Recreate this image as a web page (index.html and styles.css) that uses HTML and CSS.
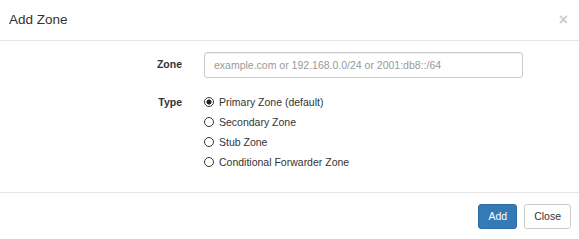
FILE: index.html
```html
<!DOCTYPE html>
<html lang="en">
<head>
    <meta charset="UTF-8">
    <title>Add Zone</title>
    <link rel="stylesheet" href="styles.css">
</head>
<body>
    <div class="modal-content">
        <div class="modal-header">
            <h4 class="modal-title">Add Zone</h4>
            <button type="button" class="close">&times;</button>
        </div>

        <div class="modal-body">
            <div class="form-group">
                <label class="control-label" for="txtZone">Zone</label>
                <div class="field">
                    <input type="text" id="txtZone" class="form-control" placeholder="example.com or 192.168.0.0/24 or 2001:db8::/64">
                </div>
            </div>
            <div class="form-group">
                <label class="control-label type-label">Type</label>
                <div class="field">
                    <label class="radio"><input type="radio" name="zoneType" checked> Primary Zone (default)</label>
                    <label class="radio"><input type="radio" name="zoneType"> Secondary Zone</label>
                    <label class="radio"><input type="radio" name="zoneType"> Stub Zone</label>
                    <label class="radio"><input type="radio" name="zoneType"> Conditional Forwarder Zone</label>
                </div>
            </div>
        </div>

        <div class="modal-footer">
            <button type="button" class="btn btn-primary">Add</button>
            <button type="button" class="btn btn-default">Close</button>
        </div>
    </div>
</body>
</html>
```

FILE: styles.css
```css
body {
    font-family: "Liberation Sans", Arial, sans-serif;
    font-size: 10.5px;
    color: #333;
    background-color: #fff;
    margin: 0;
    padding: 0;
}

.modal-content {
    width: 579px;
    background-color: #fff;
}

.modal-header {
    display: flex;
    justify-content: space-between;
    align-items: flex-start;
    padding: 11px 11px 11px 9px;
    border-bottom: 1px solid #e5e5e5;
}

.modal-title {
    margin: 0;
    font-size: 13.5px;
    font-weight: normal;
    line-height: 18px;
    color: #333;
}

.close {
    background: none;
    border: none;
    padding: 0;
    margin-top: 1px;
    font-family: "Liberation Sans", Arial, sans-serif;
    font-size: 15.75px;
    font-weight: bold;
    line-height: 16px;
    color: #000;
    opacity: 0.2;
    cursor: pointer;
}

.modal-body {
    padding: 11px 0 9px 0;
}

.form-group {
    display: grid;
    grid-template-columns: 193px 1fr;
    margin-bottom: 11px;
}

.control-label {
    text-align: right;
    font-weight: bold;
    padding: 5px 11px 0 0;
    line-height: 15px;
}

.type-label {
    padding-top: 6px;
}

.field {
    padding: 0 11px;
}

.form-control {
    display: block;
    box-sizing: border-box;
    width: 319px;
    height: 25.5px;
    padding: 4px 9px;
    font-family: "Liberation Sans", Arial, sans-serif;
    font-size: 10.5px;
    color: #555;
    border: 1px solid #ccc;
    border-radius: 3px;
    box-shadow: inset 0 1px 1px rgba(0, 0, 0, 0.075);
    outline: none;
}

.form-control::placeholder {
    color: #999;
}

.radio {
    display: flex;
    align-items: center;
    height: 20px;
    font-weight: normal;
    cursor: pointer;
}

.radio:first-child {
    margin-top: 3px;
}

.radio input {
    appearance: none;
    -webkit-appearance: none;
    box-sizing: border-box;
    width: 10px;
    height: 10px;
    margin: 0 5px 0 0;
    border: 1px solid #333;
    border-radius: 50%;
    background-color: #fff;
}

.radio input:checked {
    background: radial-gradient(circle, #222 0, #222 2.3px, #fff 2.8px);
}

.modal-footer {
    display: flex;
    justify-content: flex-end;
    gap: 7px;
    padding: 11px 8px 11px 11px;
    border-top: 1px solid #e5e5e5;
}

.btn {
    box-sizing: border-box;
    height: 25.5px;
    padding: 4px 9px;
    font-family: "Liberation Sans", Arial, sans-serif;
    font-size: 10.5px;
    line-height: 15px;
    border: 1px solid transparent;
    border-radius: 3px;
    cursor: pointer;
}

.btn-primary {
    color: #fff;
    background-color: #337ab7;
    border-color: #2e6da4;
}

.btn-default {
    color: #333;
    background-color: #fff;
    border-color: #ccc;
}
```
